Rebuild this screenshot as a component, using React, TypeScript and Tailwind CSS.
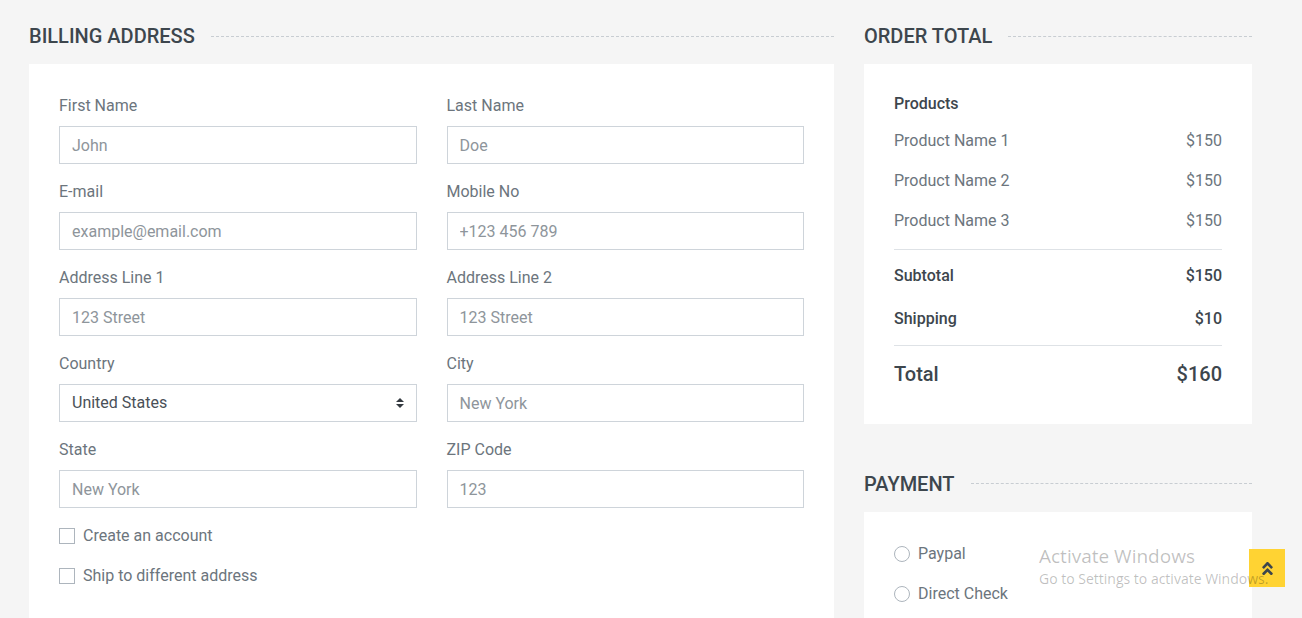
import React from "react";
import { FaAngleDoubleUp } from "react-icons/fa";

const fields = [
	{ label: "First Name", placeholder: "John" },
	{ label: "Last Name", placeholder: "Doe" },
	{ label: "E-mail", placeholder: "example@email.com" },
	{ label: "Mobile No", placeholder: "+123 456 789" },
	{ label: "Address Line 1", placeholder: "123 Street" },
	{ label: "Address Line 2", placeholder: "123 Street" },
	{ label: "Country", select: "United States" },
	{ label: "City", placeholder: "New York" },
	{ label: "State", placeholder: "New York" },
	{ label: "ZIP Code", placeholder: "123" },
];

const products = ["Product Name 1", "Product Name 2", "Product Name 3"];

const SectionTitle = ({ title }: { title: string }) => (
	<div className="flex items-center mb-4 h-6">
		<h5 className="text-[20px] leading-6 font-medium uppercase text-[#3D464D] pr-4 whitespace-nowrap">
			{title}
		</h5>
		<div className="flex-1 border-t border-dashed border-[#C8CDD2]"></div>
	</div>
);

const App = () => {
	return (
		<div
			className="relative h-[618px] overflow-hidden bg-[#F5F5F5] text-[#6C757D] text-base"
			style={{ fontFamily: "Roboto, 'Liberation Sans', sans-serif" }}
		>
			<div className="flex gap-[30px] pl-[29px] pt-6">
				{/* Billing */}
				<div className="w-[805px] shrink-0">
					<SectionTitle title="Billing Address" />
					<div className="bg-white p-[30px]">
						<div className="grid grid-cols-2 gap-x-[30px]">
							{fields.map((f, i) => (
								<div key={i} className="mb-4">
									<label className="block leading-6 mb-2">{f.label}</label>
									{f.select ? (
										<div className="relative h-[38px] border border-[#CED4DA] flex items-center px-3 text-[#495057]">
											<span>{f.select}</span>
											<svg
												className="absolute right-[12px] top-1/2 -translate-y-1/2"
												width="8"
												height="10"
												viewBox="0 0 8 10"
											>
												<path d="M4 0 L8 4 H0 Z" fill="#343A40" />
												<path d="M0 6 H8 L4 10 Z" fill="#343A40" />
											</svg>
										</div>
									) : (
										<input
											className="block w-full h-[38px] border border-[#CED4DA] px-3 outline-none placeholder:text-[#8E959B]"
											placeholder={f.placeholder}
										/>
									)}
								</div>
							))}
						</div>
						<div className="flex items-center h-6 mb-4">
							<span className="w-4 h-4 border border-[#ADB5BD] bg-white mr-2"></span>
							<span className="leading-6">Create an account</span>
						</div>
						<div className="flex items-center h-6">
							<span className="w-4 h-4 border border-[#ADB5BD] bg-white mr-2"></span>
							<span className="leading-6">Ship to different address</span>
						</div>
					</div>
				</div>

				{/* Order total + payment */}
				<div className="w-[388px] shrink-0">
					<SectionTitle title="Order Total" />
					<div className="bg-white p-[30px] mb-12">
						<div className="border-b border-[#DEE2E6]">
							<h6 className="text-base leading-[19.2px] font-medium text-[#3D464D] mb-4">Products</h6>
							{products.map((p) => (
								<div key={p} className="flex justify-between leading-6 mb-4">
									<p>{p}</p>
									<p>$150</p>
								</div>
							))}
						</div>
						<div className="border-b border-[#DEE2E6] pt-4 pb-2 text-[#3D464D] font-medium">
							<div className="flex justify-between mb-4 leading-[19.2px]">
								<h6 className="mb-2">Subtotal</h6>
								<h6 className="mb-2">$150</h6>
							</div>
							<div className="flex justify-between leading-[19.2px]">
								<h6 className="mb-2">Shipping</h6>
								<h6 className="mb-2">$10</h6>
							</div>
						</div>
						<div className="pt-2">
							<div className="flex justify-between mt-2 text-[20px] leading-6 font-medium text-[#3D464D]">
								<h5 className="mb-2">Total</h5>
								<h5 className="mb-2">$160</h5>
							</div>
						</div>
					</div>

					<SectionTitle title="Payment" />
					<div className="bg-white p-[30px]">
						<div className="flex items-center h-6 mb-4">
							<span className="w-4 h-4 rounded-full border border-[#ADB5BD] bg-white mr-2"></span>
							<span className="leading-6">Paypal</span>
						</div>
						<div className="flex items-center h-6">
							<span className="w-4 h-4 rounded-full border border-[#ADB5BD] bg-white mr-2"></span>
							<span className="leading-6">Direct Check</span>
						</div>
					</div>
				</div>
			</div>

			{/* Back to top */}
			<a className="absolute right-[17px] bottom-[31px] w-9 h-[38px] bg-[#FFD333] flex items-center justify-center text-[#3D464D]">
				<FaAngleDoubleUp size={17} />
			</a>

			{/* OS watermark */}
			<div
				className="absolute left-[1039px] top-[544px] text-black/25 pointer-events-none"
				style={{ fontFamily: "'Open Sans', 'Noto Sans', sans-serif" }}
			>
				<div className="text-[19px] leading-6">Activate Windows</div>
				<div className="text-[14px] leading-5 mt-[1px]">Go to Settings to activate Windows.</div>
			</div>
		</div>
	);
};

export default App;
